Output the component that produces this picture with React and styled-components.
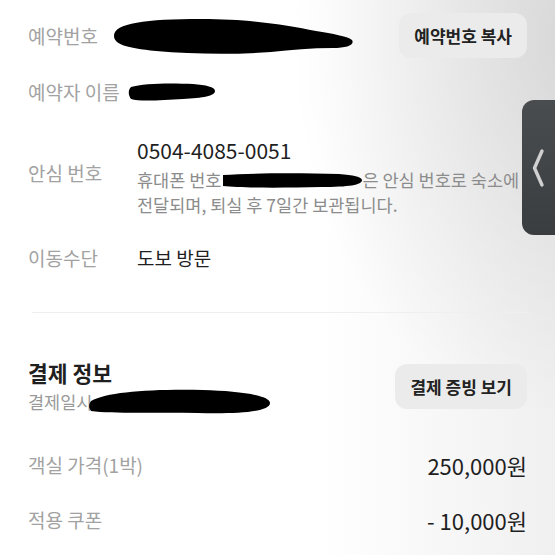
import React from "react";
import styled, { createGlobalStyle } from "styled-components";

const GlobalStyle = createGlobalStyle`
  html, body {
    margin: 0;
    padding: 0;
    background: #fff;
  }
  body {
    font-family: "Noto Sans CJK KR", "Noto Sans", sans-serif;
  }
`;

// marker scribbles that hide personal data
function Blob({ w, h, d }) {
  return (
    <Redact width={w} height={h} viewBox={`0 0 ${w} ${h}`}>
      <path d={d} fill="#000" />
    </Redact>
  );
}

export default function App() {
  return (
    <Page>
      <GlobalStyle />
      <Section>
        <TopRow>
          <InlineLine $gap={13}>
            <Label>예약번호</Label>
            <Blob
              w={244}
              h={38}
              d="M3 19 C3 6 35 2 90 2 C140 2 175 8 205 14 C222 17 236 19 241 23 C244 28 236 31 222 31 C200 31 180 33 160 35 C120 38 80 37 45 34 C15 31 3 27 3 19 Z"
            />
          </InlineLine>
          <GreyButton>예약번호 복사</GreyButton>
        </TopRow>
        <NameRow>
          <InlineLine $gap={8}>
            <Label>예약자 이름</Label>
            <Blob
              w={88}
              h={20}
              d="M3 5 C15 1 45 1 65 2 C78 3 87 5 87 9 C87 14 75 16 55 17 C35 18 12 20 3 17 C0 13 0 8 3 5 Z"
            />
          </InlineLine>
        </NameRow>
        <SafeRow>
          <LabelCell $offset={23}>안심 번호</LabelCell>
          <ValueCell>
            <Phone>0504-4085-0051</Phone>
            <Note>
              휴대폰 번호
              <Blob
                w={142}
                h={17}
                d="M2 3 C30 1 80 1 118 2 C132 3 141 5 141 8 C141 13 128 15 100 15 C60 16 20 16 2 14 Z"
              />
              은 안심 번호로 숙소에
              <br />
              전달되며, 퇴실 후 7일간 보관됩니다.
            </Note>
          </ValueCell>
        </SafeRow>
        <InfoRow>
          <LabelCell>이동수단</LabelCell>
          <Value>도보 방문</Value>
        </InfoRow>
      </Section>
      <Divider />
      <Section>
        <PayHead>
          <div>
            <Title>결제 정보</Title>
            <SubLine>
              결제일시
              <Blob
                w={184}
                h={27}
                d="M3 13 C20 4 60 1 115 2 C150 3 182 7 182 15 C182 24 150 26 110 25 C70 24 25 26 3 23 C0 19 1 16 3 13 Z"
              />
            </SubLine>
          </div>
          <GreyButton>결제 증빙 보기</GreyButton>
        </PayHead>
        <PriceRow $gap={35}>
          <LabelCell>객실 가격(1박)</LabelCell>
          <Amount>250,000원</Amount>
        </PriceRow>
        <PriceRow $gap={25}>
          <LabelCell>적용 쿠폰</LabelCell>
          <Amount>- 10,000원</Amount>
        </PriceRow>
      </Section>
      <SideTab>
        <svg width="14" height="40" viewBox="0 0 14 40">
          <path
            d="M11 3 L3.5 20 L11 37"
            fill="none"
            stroke="#d0d0d0"
            strokeWidth="3.4"
            strokeLinecap="round"
            strokeLinejoin="round"
          />
        </svg>
      </SideTab>
    </Page>
  );
}

const Page = styled.div`
  position: relative;
  width: 555px;
  height: 555px;
  overflow: hidden;
  background:
    radial-gradient(ellipse 280px 380px at 570px 40px, rgba(0, 0, 0, 0.1), rgba(0, 0, 0, 0) 100%),
    linear-gradient(to right, #ffffff 58%, #f0f0f0 100%);
`;

const Section = styled.div`
  padding: 0 28px;
`;

const TopRow = styled.div`
  display: flex;
  align-items: center;
  justify-content: space-between;
  padding-top: 13px;
`;

const InlineLine = styled.div`
  display: flex;
  align-items: center;
  gap: ${(p) => p.$gap}px;
`;

const Label = styled.span`
  font-size: 19px;
  line-height: 28px;
  color: #a2a2a2;
  white-space: nowrap;
`;

const Redact = styled.svg`
  display: inline-block;
  vertical-align: middle;
  flex-shrink: 0;
`;

const GreyButton = styled.button`
  height: 45px;
  padding: 0 15px;
  border: none;
  border-radius: 12px;
  background: #ebebeb;
  color: #222;
  font-family: inherit;
  font-size: 17px;
  font-weight: 700;
  white-space: nowrap;
`;

const NameRow = styled.div`
  margin-top: 20px;
`;

const InfoRow = styled.div`
  display: grid;
  grid-template-columns: 109px 1fr;
  align-items: center;
  margin-top: 27px;
`;

const SafeRow = styled(InfoRow)`
  align-items: start;
  margin-top: 30px;
`;

const LabelCell = styled(Label)`
  margin-top: ${(p) => p.$offset || 0}px;
`;

const ValueCell = styled.div`
  display: flex;
  flex-direction: column;
`;

const Phone = styled.div`
  font-size: 21px;
  line-height: 28px;
  color: #1f1f1f;
`;

const Note = styled.div`
  margin-top: 3px;
  font-size: 17.5px;
  line-height: 25px;
  color: #8c8c8c;
  white-space: nowrap;

  ${Redact} {
    margin: -3px -1px 0 0;
  }
`;

const Value = styled.div`
  font-size: 19px;
  line-height: 28px;
  color: #1f1f1f;
`;

const Divider = styled.div`
  height: 1px;
  margin: 40px 26px 0 32px;
  background: #efefef;
`;

const PayHead = styled.div`
  display: flex;
  align-items: center;
  justify-content: space-between;
  margin-top: 45px;
`;

const Title = styled.div`
  font-size: 21.5px;
  font-weight: 700;
  line-height: 30px;
  color: #1f1f1f;
`;

const SubLine = styled.div`
  display: flex;
  align-items: center;
  font-size: 17.5px;
  line-height: 25px;
  color: #9a9a9a;

  ${Redact} {
    margin-left: -4px;
  }
`;

const PriceRow = styled.div`
  display: flex;
  align-items: center;
  justify-content: space-between;
  height: 30px;
  margin-top: ${(p) => p.$gap}px;
`;

const Amount = styled.div`
  font-size: 22px;
  color: #1f1f1f;
`;

const SideTab = styled.div`
  position: absolute;
  top: 100px;
  right: 0;
  width: 33px;
  height: 135px;
  box-sizing: border-box;
  padding-left: 9px;
  border-radius: 12px 0 0 12px;
  background: linear-gradient(to bottom, #4a4d4f, #3a3d3f);
  display: flex;
  align-items: center;
`;
